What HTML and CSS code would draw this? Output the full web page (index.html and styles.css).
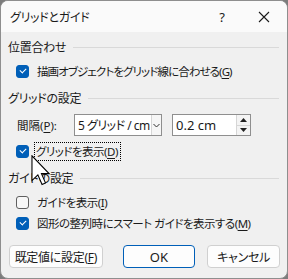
FILE: index.html
```html
<!DOCTYPE html>
<html lang="ja">
<head>
    <meta charset="UTF-8">
    <title>グリッドとガイド</title>
    <link rel="stylesheet" href="styles.css">
</head>
<body>
    <div class="window">
        <div class="titlebar">
            <span class="title">グリッドとガイド</span>
            <span class="tb-btn help">?</span>
            <span class="tb-btn close">
                <svg width="12" height="12" viewBox="0 0 12 12"><path d="M1 1 L11 11 M11 1 L1 11" stroke="#1a1a1a" stroke-width="1.1" fill="none"/></svg>
            </span>
        </div>

        <div class="content">
            <div class="group-head first"><span>位置合わせ</span><i class="rule"></i></div>
            <label class="row">
                <span class="check on"></span>
                <span class="lbl narrow">描画オブジェクトをグリッド線に合わせる(<u>G</u>)</span>
            </label>

            <div class="group-head"><span>グリッドの設定</span><i class="rule"></i></div>
            <div class="row spacing">
                <span class="lbl field-name">間隔(<u>P</u>):</span>
                <div class="combo">
                    <span class="combo-text">5 グリッド / cm</span>
                    <span class="combo-arrow">
                        <svg width="7" height="5" viewBox="0 0 7 5"><path d="M0.5 1 L3.5 4 L6.5 1" stroke="#333" stroke-width="1" fill="none"/></svg>
                    </span>
                </div>
                <div class="spin">
                    <span class="spin-text">0.2 cm</span>
                    <span class="spin-btns">
                        <span class="spin-btn"><svg width="7" height="4" viewBox="0 0 7 4"><path d="M0 4 L3.5 0 L7 4 Z" fill="#222"/></svg></span>
                        <span class="spin-btn"><svg width="7" height="4" viewBox="0 0 7 4"><path d="M0 0 L3.5 4 L7 0 Z" fill="#222"/></svg></span>
                    </span>
                </div>
            </div>
            <label class="row focus-row">
                <span class="check on"></span>
                <span class="lbl focus">グリッドを表示(<u>D</u>)</span>
            </label>

            <div class="group-head"><span>ガイドの設定</span><i class="rule"></i></div>
            <label class="row">
                <span class="check"></span>
                <span class="lbl">ガイドを表示(<u>I</u>)</span>
            </label>
            <label class="row tight">
                <span class="check on"></span>
                <span class="lbl">図形の整列時にスマート ガイドを表示する(<u>M</u>)</span>
            </label>

            <div class="buttons">
                <button class="btn wide">既定値に設定(<u>F</u>)</button>
                <button class="btn ok">OK</button>
                <button class="btn">キャンセル</button>
            </div>
        </div>

        <!-- mouse pointer over the dialog -->
        <svg class="cursor" width="19" height="31" viewBox="0 0 12 20">
            <path d="M0.5 0.5 L0.5 16.5 L4.3 12.8 L7 19 L9.2 18 L6.6 12 L11.5 12 Z" fill="#fff" stroke="#000" stroke-width="0.7" stroke-linejoin="miter"/>
        </svg>
    </div>
</body>
</html>
```

FILE: styles.css
```css
html, body {
    margin: 0;
    padding: 0;
}

body {
    width: 288px;
    height: 279px;
    background: #7c7c7c;
    font-family: "Noto Sans", "Noto Sans CJK JP", sans-serif;
    font-size: 12px;
    color: #1a1a1a;
    font-feature-settings: "palt";
}

.window {
    position: relative;
    box-sizing: border-box;
    width: 288px;
    height: 279px;
    border: 1px solid #8e8e8e;
    border-radius: 8px;
    background: #f0f0f0;
    overflow: hidden;
}

.titlebar {
    display: flex;
    align-items: center;
    height: 31px;
    background: #fafafa;
    padding-left: 9px;
}

.title {
    flex: 1;
    font-size: 12px;
    letter-spacing: -0.3px;
}

.tb-btn {
    display: flex;
    align-items: center;
    justify-content: center;
    width: 46px;
    height: 31px;
}

.help {
    font-size: 13px;
    margin-right: -4px;
}

.content {
    padding: 0 7px;
}

.group-head {
    display: flex;
    align-items: center;
    height: 20px;
    margin-top: 7px;
    letter-spacing: -0.3px;
}

.group-head.first {
    margin-top: 5px;
}

.group-head .rule {
    flex: 1;
    height: 1px;
    background: #d9d9d9;
    margin-left: 7px;
    margin-right: 1px;
}

.row {
    display: flex;
    align-items: center;
    height: 20px;
    margin-top: 4px;
    padding-left: 8px;
}

.row.tight {
    margin-top: 1px;
}

.check {
    box-sizing: border-box;
    flex: none;
    width: 13px;
    height: 13px;
    border: 1px solid #5f5f5f;
    border-radius: 3px;
    background: #f7f7f7;
    margin-right: 8px;
    position: relative;
}

.check.on {
    background: #005fb8;
    border-color: #005fb8;
}

.check.on::after {
    content: "";
    position: absolute;
    left: 3px;
    top: 2px;
    width: 5px;
    height: 3px;
    border-left: 1px solid #fff;
    border-bottom: 1px solid #fff;
    transform: rotate(-45deg);
}

.lbl {
    font-size: 11.5px;
    letter-spacing: -0.5px;
    white-space: nowrap;
}

.lbl.narrow {
    letter-spacing: -0.9px;
}

.lbl u {
    text-decoration-thickness: 1px;
    text-underline-offset: 2px;
}

.spacing {
    height: 22px;
    margin-top: 6px;
    padding-left: 9px;
}

.field-name {
    width: 57px;
    letter-spacing: 0;
}

.combo {
    box-sizing: border-box;
    display: flex;
    align-items: stretch;
    width: 88px;
    height: 22px;
    border: 1px solid #8f8f8f;
    background: #fff;
}

.combo-text {
    flex: 1;
    display: flex;
    align-items: center;
    padding-left: 3px;
    font-size: 12px;
    letter-spacing: -0.5px;
    white-space: nowrap;
    overflow: hidden;
}

.combo-arrow {
    width: 9px;
    display: flex;
    align-items: center;
    justify-content: center;
    border-left: 1px solid #d6d6d6;
    background: #f6f6f6;
}

.spin {
    box-sizing: border-box;
    display: flex;
    width: 79px;
    height: 22px;
    margin-left: 10px;
    border: 1px solid #8f8f8f;
    background: #fff;
}

.spin-text {
    flex: 1;
    display: flex;
    align-items: center;
    padding-left: 3px;
    font-size: 13px;
}

.spin-btns {
    display: flex;
    flex-direction: column;
    width: 14px;
}

.spin-btn {
    flex: 1;
    display: flex;
    align-items: center;
    justify-content: center;
    border-left: 1px solid #d6d6d6;
    background: #f4f4f4;
}

.spin-btn + .spin-btn {
    border-top: 1px solid #d6d6d6;
}

.focus-row {
    margin-top: 5px;
}

.focus {
    outline: 1px dotted #000;
    outline-offset: 0;
    padding: 0 2px 0 1px;
    margin-left: -2px;
    line-height: 17px;
}

.buttons {
    display: flex;
    margin-top: 12px;
    padding-left: 1px;
}

.btn {
    box-sizing: border-box;
    height: 23px;
    width: 73px;
    border: 1px solid #d0d0d0;
    border-radius: 4px;
    background: #fdfdfd;
    font-family: "Noto Sans", "Noto Sans CJK JP", sans-serif;
    font-size: 12px;
    font-feature-settings: "palt";
    letter-spacing: -0.3px;
    color: #1a1a1a;
    padding: 0;
}

.btn.wide {
    width: 94px;
}

.btn.ok {
    margin-left: 20px;
    border: 1px solid #005fb8;
    box-shadow: inset 0 0 0 1px #fdfdfd;
    font-size: 13px;
    letter-spacing: 0;
}

.btn.ok + .btn {
    margin-left: 12px;
}

.cursor {
    position: absolute;
    left: 30px;
    top: 154px;
}
```
